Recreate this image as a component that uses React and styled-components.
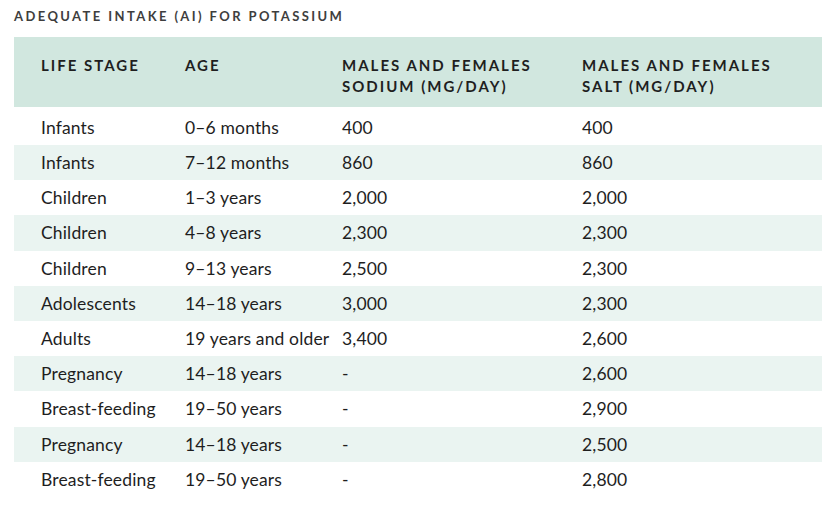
import React from 'react';
import styled, { createGlobalStyle } from 'styled-components';

const GlobalStyle = createGlobalStyle`
  body {
    margin: 0;
    background: #fff;
    font-family: Lato, "Noto Sans", sans-serif;
  }
`;

const rows = [
  ['Infants', '0–6 months', '400', '400'],
  ['Infants', '7–12 months', '860', '860'],
  ['Children', '1–3 years', '2,000', '2,000'],
  ['Children', '4–8 years', '2,300', '2,300'],
  ['Children', '9–13 years', '2,500', '2,300'],
  ['Adolescents', '14–18 years', '3,000', '2,300'],
  ['Adults', '19 years and older', '3,400', '2,600'],
  ['Pregnancy', '14–18 years', '-', '2,600'],
  ['Breast-feeding', '19–50 years', '-', '2,900'],
  ['Pregnancy', '14–18 years', '-', '2,500'],
  ['Breast-feeding', '19–50 years', '-', '2,800'],
];

const Page = styled.div`
  width: 839px;
  height: 514px;
  padding: 9px 17px 0 14px;
  box-sizing: border-box;
`;

const Title = styled.h2`
  margin: 0 0 13px 0;
  font-size: 13px;
  font-weight: 700;
  letter-spacing: 2.4px;
  color: #3e3e3e;
  line-height: 15px;
`;

const Table = styled.div`
  display: grid;
  grid-template-columns: 171px 157px 240px 1fr;
`;

const HeadRow = styled.div`
  display: contents;
`;

const HeadCell = styled.div`
  background: #d1e7df;
  padding: 18px 0 10px 0;
  font-size: 15px;
  font-weight: 700;
  letter-spacing: 2px;
  line-height: 21px;
  color: #1f1f1f;
  &:first-child {
    padding-left: 27px;
  }
`;

const Row = styled.div`
  display: contents;
`;

const Cell = styled.div`
  background: ${(p) => (p.$shaded ? '#eaf4f1' : '#fff')};
  height: ${(p) => (p.$first ? '38px' : '35.2px')};
  padding-top: ${(p) => (p.$first ? '3px' : '0')};
  box-sizing: border-box;
  display: flex;
  align-items: center;
  font-size: 17.5px;
  letter-spacing: 0.15px;
  color: #1e1e1e;
  white-space: nowrap;
  &:first-child {
    padding-left: 27px;
  }
`;

export default function App() {
  return (
    <Page>
      <GlobalStyle />
      <Title>ADEQUATE INTAKE (AI) FOR POTASSIUM</Title>
      <Table>
        <HeadRow>
          <HeadCell>LIFE STAGE</HeadCell>
          <HeadCell>AGE</HeadCell>
          <HeadCell>
            MALES AND FEMALES
            <br />
            SODIUM (MG/DAY)
          </HeadCell>
          <HeadCell>
            MALES AND FEMALES
            <br />
            SALT (MG/DAY)
          </HeadCell>
        </HeadRow>
        {rows.map((row, idx) => (
          <Row key={idx}>
            {row.map((val, i) => (
              <Cell key={i} $shaded={idx % 2 === 1} $first={idx === 0}>
                {val}
              </Cell>
            ))}
          </Row>
        ))}
      </Table>
    </Page>
  );
}
